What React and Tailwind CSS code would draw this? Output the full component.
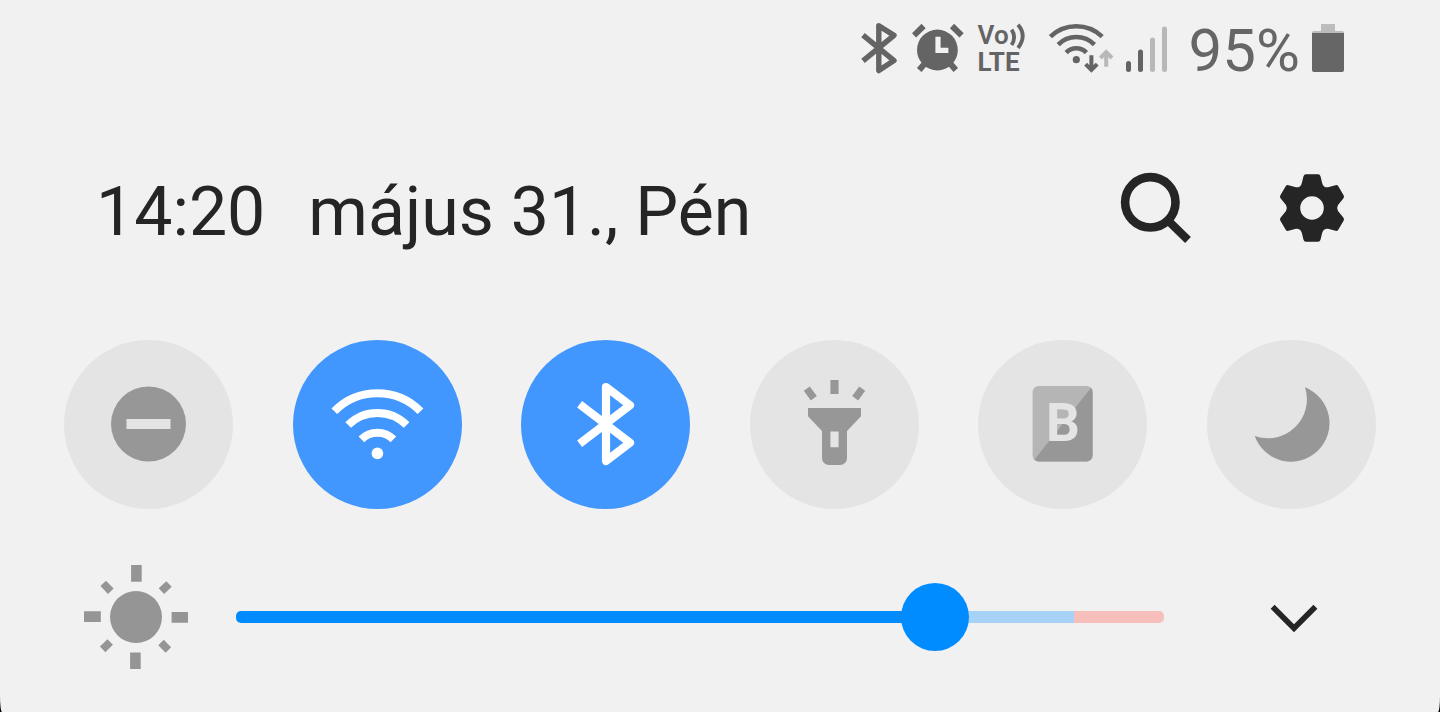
import { useState } from "react";

function StatusBluetooth() {
  return (
    <svg className="h-[54px] w-10" viewBox="0 0 40 54" fill="none" stroke="#646464" strokeWidth="5.4" strokeLinejoin="round" aria-hidden="true">
      <path d="M3 13.2 34 38.6 18.8 48.6V3.8L34 13.4 3 38.8" />
    </svg>
  );
}

function StatusAlarm() {
  return (
    <svg className="h-[54px] w-13" viewBox="0 0 52 54" fill="none" stroke="#646464" strokeWidth="6" aria-hidden="true">
      <circle cx="25.4" cy="28" r="20.4" fill="#646464" stroke="none" />
      <path d="M2 13.4 11.6 4M40 4l9.6 9.4M15 39 7.2 48M36 39l7.8 9" />
      <path d="M26 14.8v13.6h10.4" stroke="#f1f1f1" strokeWidth="5.2" />
    </svg>
  );
}

function StatusVolte() {
  return (
    <div className="flex h-[54px] w-[54px] flex-col pl-0.5 text-[26px] leading-[27px] font-semibold text-[#646464]">
      <div className="flex">
        <span>Vo</span>
        <svg className="h-[27px] w-5" viewBox="0 0 20 27" fill="none" stroke="#646464" strokeWidth="3.8" aria-hidden="true">
          <path d="M2.600 7.600Q7.600 15 2.600 23" />
          <path d="M9 2.800Q18.400 13.600 9 26" />
        </svg>
      </div>
      <span className="font-bold">LTE</span>
    </div>
  );
}

function StatusWifi() {
  return (
    <svg className="h-[54px] w-18" viewBox="0 0 72 54" fill="none" aria-hidden="true">
      <g stroke="#646464" strokeWidth="4.6">
        <path d="M8.4 14.6a37.6 37.6 0 0 1 51.8 0" />
        <path d="M16.2 22.6a25.5 25.5 0 0 1 36.2 0" />
        <path d="M24.2 30.6a14 14 0 0 1 20.2 0" />
      </g>
      <circle cx="34.3" cy="37.7" r="3.6" fill="#646464" />
      <path d="M49.4 33.2v14.6M43.6 42.2l5.8 5.8 5.8-5.8" stroke="#646464" strokeWidth="4" />
      <path d="M64.2 44.8V30.4M58.4 36l5.8-5.8 5.8 5.8" stroke="#b8b8b8" strokeWidth="4" />
    </svg>
  );
}

function StatusSignal() {
  return (
    <svg className="h-[54px] w-[51px]" viewBox="0 0 51 54" aria-hidden="true">
      <g fill="#646464">
        <rect x="0" y="39" width="5" height="11" rx="2.5" />
        <rect x="12" y="27.4" width="5" height="22.6" rx="2.5" />
      </g>
      <g fill="#b8b8b8">
        <rect x="24" y="15.4" width="5" height="34.6" rx="2.5" />
        <rect x="36" y="4.6" width="5" height="45.4" rx="2.5" />
      </g>
    </svg>
  );
}

function StatusBattery() {
  return (
    <svg className="h-[54px] w-8" viewBox="0 0 32 54" aria-hidden="true">
      <path d="M9 2h14v7h7.500a1.500 1.500 0 0 1 1.500 1.500V14H0v-3.500A1.500 1.500 0 0 1 1.500 9H9z" fill="#bcbcbc" />
      <path d="M0 11h32v37a2 2 0 0 1-2 2H2a2 2 0 0 1-2-2z" fill="#666" />
    </svg>
  );
}

function SearchIcon() {
  return (
    <svg className="size-20" viewBox="0 0 80 80" fill="none" stroke="#252525" aria-hidden="true">
      <circle cx="34.300" cy="33.300" r="25.200" strokeWidth="8.600" />
      <path d="M52 51.500 72 71" strokeWidth="8.200" />
    </svg>
  );
}

function GearIcon() {
  return (
    <svg className="size-20" viewBox="-40 -39 80 80" aria-hidden="true">
      <path
        fill="#252525"
        fillRule="evenodd"
        d="M-6-33.700H6Q8-33.700 8.500-31.700L10.300-24.600Q11.500-20.300 16-20.700L23.500-22.800Q25.300-23.300 26.300-21.700L31.600-12.700Q32.500-11.200 31.500-9.800L26-3Q24.300 0 26 3L31.500 9.800Q32.500 11.200 31.600 12.700L26.300 21.700Q25.300 23.300 23.500 22.800L16 20.700Q11.500 20.300 10.300 24.600L8.500 31.700Q8 33.700 6 33.700H-6Q-8 33.700-8.500 31.700L-10.300 24.600Q-11.500 20.300-16 20.700L-23.500 22.800Q-25.300 23.300-26.300 21.700L-31.600 12.700Q-32.500 11.200-31.500 9.800L-26 3Q-24.300 0-26-3L-31.500-9.800Q-32.500-11.200-31.600-12.700L-26.300-21.700Q-25.300-23.300-23.500-22.800L-16-20.700Q-11.500-20.300-10.300-24.600L-8.500-31.700Q-8-33.700-6-33.700ZM0-11.800A11.800 11.800 0 0 0 0 11.800A11.800 11.800 0 0 0 0-11.800Z"
      />
    </svg>
  );
}

const tiles = [
  {
    id: "dnd",
    label: "Ne zavarjanak",
    on: false,
    icon: (
      <>
        <circle cx="84.5" cy="84" r="37.5" fill="#979797" />
        <path d="M62.500 79h44v10h-44z" fill="#e4e4e4" />
      </>
    ),
  },
  {
    id: "wifi",
    label: "Wi-Fi",
    on: true,
    icon: (
      <>
        <g fill="none" stroke="#fff" strokeWidth="8">
          <path d="M41.300 71.200a60.500 60.500 0 0 1 86.200 0" />
          <path d="M55.200 85a41.500 41.500 0 0 1 58.400 0" />
          <path d="M68.400 99.400a22.500 22.500 0 0 1 32 0" />
        </g>
        <circle cx="84.4" cy="113.400" r="5.800" fill="#fff" />
      </>
    ),
  },
  {
    id: "bluetooth",
    label: "Bluetooth",
    on: true,
    icon: (
      <path
        d="M58.600 64.200 109 102.800 85 121V47l24 18.200-50.400 38.600"
        fill="none"
        stroke="#fff"
        strokeWidth="8.200"
        strokeLinejoin="round"
      />
    ),
  },
  {
    id: "flashlight",
    label: "Zseblámpa",
    on: false,
    icon: (
      <>
        <path d="M80.400 40h8.200v14h-8.200z" fill="#979797" />
        <path d="m56.800 48.600 7 9.600M112.200 48.600l-7 9.600" stroke="#979797" strokeWidth="7.400" />
        <path
          d="M58 68h53v8.300L97 91v27a7 7 0 0 1-7 7H79a7 7 0 0 1-7-7V91L58 76.300zM80.400 91.600v15.700h8.200V91.600z"
          fill="#979797"
          fillRule="evenodd"
        />
      </>
    ),
  },
  {
    id: "bixby",
    label: "Bixby",
    on: false,
    icon: (
      <>
        <rect x="54.600" y="46" width="60" height="75.600" rx="6" fill="#b5b5b5" />
        <path d="M113 47.800a6 6 0 0 1 1.600 4.200v63.600a6 6 0 0 1-6 6h-48a6 6 0 0 1-4.200-1.800z" fill="#979797" />
        <text x="68" y="101" fontSize="53" fill="#e4e4e4" className="font-['Roboto',sans-serif] font-bold">B</text>
      </>
    ),
  },
  {
    id: "night",
    label: "Éjszakai mód",
    on: false,
    icon: <path d="M98 47.300A38.500 38.500 0 1 1 47.700 96 39 39 0 0 0 98 47.300z" fill="#979797" />,
  },
];

function Tile({ tile }) {
  const [on, setOn] = useState(tile.on);
  return (
    <button
      type="button"
      aria-label={tile.label}
      aria-pressed={on}
      onClick={() => setOn(!on)}
      className={`size-[169px] rounded-full ${on ? "bg-[#4297ff]" : "bg-[#e4e4e4]"}`}
    >
      <svg className="size-full" viewBox="0 0 169 169" aria-hidden="true">
        {tile.icon}
      </svg>
    </button>
  );
}

function SunIcon() {
  return (
    <svg className="size-26 shrink-0" viewBox="0 0 104 104" fill="none" stroke="#959595" aria-hidden="true">
      <circle cx="52" cy="52" r="26" fill="#959595" stroke="none" />
      <path d="M52.400 0v16.800M51.400 87.400v16.600M0 51.600h16.800M87.600 52.400H104" strokeWidth="10.600" />
      <path d="m19.200 18.400 7.600 7.800M85 19l-7.600 7.200M18.600 84.400l7.600-7.400M77 77.600l7.400 7.400" strokeWidth="7.800" />
    </svg>
  );
}

function Brightness() {
  const [value, setValue] = useState(773);
  const fill = `${value / 10}%`;
  return (
    <input
      type="range"
      aria-label="Fényerő"
      min="0"
      max="1000"
      value={value}
      onChange={(e) => setValue(Number(e.target.value))}
      style={{ "--fill": fill }}
      className="ml-12 h-[68px] min-w-0 flex-1 appearance-none bg-transparent [&::-webkit-slider-runnable-track]:h-3 [&::-webkit-slider-runnable-track]:rounded-[5px] [&::-webkit-slider-runnable-track]:bg-[linear-gradient(to_right,#008cff_var(--fill),transparent_var(--fill)),linear-gradient(to_right,#a6d2f7_90.300%,#f6bfbc_90.300%)] [&::-webkit-slider-thumb]:-mt-7 [&::-webkit-slider-thumb]:size-[68px] [&::-webkit-slider-thumb]:appearance-none [&::-webkit-slider-thumb]:rounded-full [&::-webkit-slider-thumb]:bg-[#008cff]"
    />
  );
}

export default function App() {
  return (
    <div className="flex min-h-screen flex-col bg-black font-['Roboto',sans-serif]">
      <main className="flex-1 rounded-b-[2px_16px] bg-[#f1f1f1] pt-[22px] pb-10">
        <div className="flex h-[54px] items-center justify-end gap-3 px-24">
          <StatusBluetooth />
          <StatusAlarm />
          <StatusVolte />
          <StatusWifi />
          <StatusSignal />
          <span className="pt-1 text-[60px] leading-[54px] text-[#666]">95%</span>
          <StatusBattery />
        </div>

        <header className="mt-[93px] flex h-20 items-center pr-[88px] pl-24 text-[#252525]">
          <div className="flex gap-[43px] pt-1.5 text-[68px] leading-20">
            <time>14:20</time>
            <span>május 31., Pén</span>
          </div>
          <button type="button" aria-label="Keresés" className="ml-auto">
            <SearchIcon />
          </button>
          <button type="button" aria-label="Beállítások" className="ml-19">
            <GearIcon />
          </button>
        </header>

        <section className="mt-[91px] flex justify-between px-16">
          {tiles.map((tile) => (
            <Tile key={tile.id} tile={tile} />
          ))}
        </section>

        <div className="mt-14 flex h-26 items-center pr-[106px] pl-[84px]">
          <SunIcon />
          <Brightness />
          <button type="button" aria-label="Kibontás" className="ml-[88px]">
            <svg className="h-20 w-[82px]" viewBox="0 0 82 80" fill="none" stroke="#252525" strokeWidth="5.600" aria-hidden="true">
              <path d="M20.600 29.800 42 51.200l21.400-21.400" />
            </svg>
          </button>
        </div>
      </main>
    </div>
  );
}
